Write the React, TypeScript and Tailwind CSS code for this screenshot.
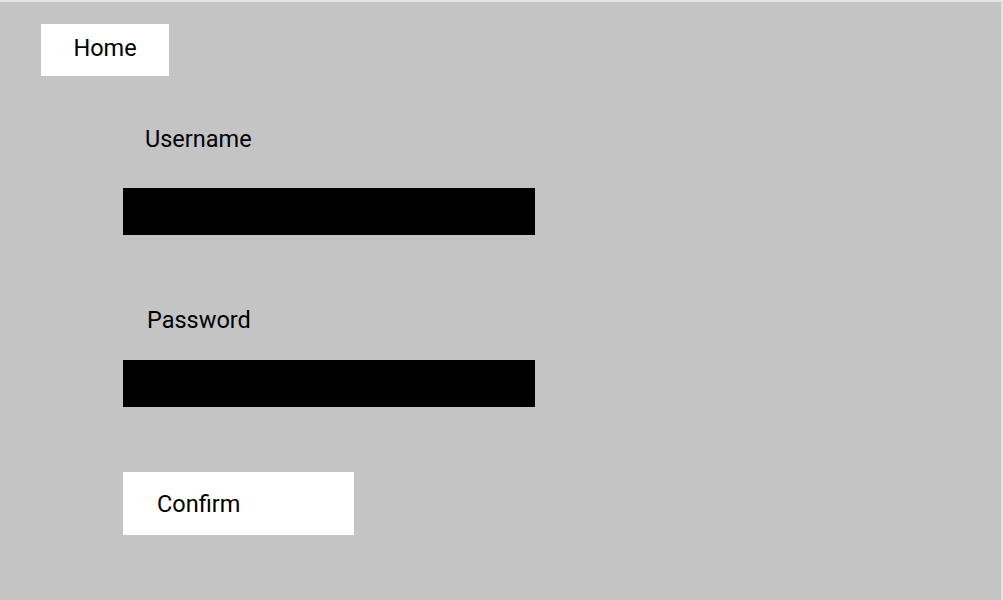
/**
 * Login screen: home button, username/password fields, confirm.
 */
export default function App() {
  return (
    <div
      className="w-[1003px] h-[600px] bg-[#c4c4c4] border-t-2 border-r-2 border-[#e3e3e3] pt-[22px] pl-[41px] text-black"
      style={{ fontFamily: "Roboto, 'Liberation Sans', sans-serif" }}
    >
      <button className="w-[128px] h-[52px] bg-white flex items-center justify-center pb-[4px] text-[23.5px] leading-[26px]">
        Home
      </button>

      <div className="ml-[82px] flex flex-col">
        <label className="mt-[50px] pl-[22px] text-[23.5px] leading-[26px]">Username</label>
        <input className="mt-[36px] w-[412px] h-[47px] bg-black border-0 outline-none" />

        <label className="mt-[72px] pl-[24px] text-[23.5px] leading-[26px]">Password</label>
        <input type="password" className="mt-[27px] w-[412px] h-[47px] bg-black border-0 outline-none" />

        <button className="mt-[65px] w-[231px] h-[63px] bg-white flex items-center pl-[34px] text-[23.5px] leading-[26px]">
          Confirm
        </button>
      </div>
    </div>
  );
}
